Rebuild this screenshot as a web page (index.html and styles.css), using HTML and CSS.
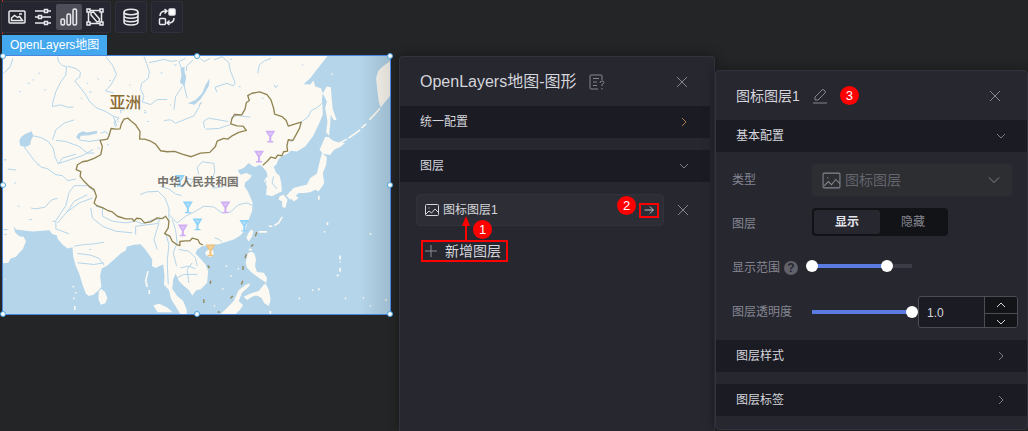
FILE: index.html
```
<!DOCTYPE html>
<html lang="zh-CN">

<head>
    <meta charset="UTF-8">
    <meta name="viewport" content="width=device-width, initial-scale=1.0">
    <title>OpenLayers地图</title>
    <link rel="stylesheet" href="styles.css">
</head>

<body>
    <div class="workspace">
        <main class="canvas">
            <div class="toolbar">
                <div class="tool-group">
                    <button class="tool" aria-label="图片"><svg viewBox="0 0 18 18"><rect x="1" y="3" width="16" height="12" rx="1"/><path d="M3.500 12.500V10l3-2.500 3 2 2-1 3 4zM11 6h3"/></svg></button>
                    <button class="tool" aria-label="设置"><svg viewBox="0 0 18 18"><path d="M1 3h9M14 3h3M1 9h3M8 9h9M1 15h9M14 15h3"/><rect x="10.500" y="1.500" width="3" height="3"/><rect x="4.500" y="7.500" width="3" height="3"/><rect x="10.500" y="13.500" width="3" height="3"/></svg></button>
                    <button class="tool active" aria-label="图形"><svg viewBox="0 0 18 18"><rect x="1" y="11" width="3.500" height="6" rx="1.500"/><rect x="7" y="6" width="3.500" height="11" rx="1.500"/><rect x="13" y="1" width="3.500" height="16" rx="1.500"/></svg></button>
                    <button class="tool" aria-label="编辑"><svg viewBox="0 0 18 18"><path d="M4 2.500h10M4 15.500h10M2.500 4v10M15.500 4v10M5 4.500l2.500-.5 6 7-.5 2.500-2 .5-6-7z"/><rect x="1" y="1" width="3" height="3"/><rect x="14" y="1" width="3" height="3"/><rect x="1" y="14" width="3" height="3"/><rect x="14" y="14" width="3" height="3"/></svg></button>
                </div>
                <div class="tool-group">
                    <button class="tool" aria-label="数据"><svg viewBox="0 0 18 18"><ellipse cx="9" cy="4" rx="7" ry="2.800"/><path d="M2 4v10c0 4 14 4 14 0V4M2 7.500c0 3.500 14 3.500 14 0M2 11c0 3.500 14 3.500 14 0"/></svg></button>
                </div>
                <div class="tool-group">
                    <button class="tool" aria-label="交互"><svg viewBox="0 0 18 18"><rect class="solid" x="11" y="1" width="6" height="6" rx="1"/><rect x="1.500" y="10.500" width="6" height="6" rx="1"/><path d="M2 8c0-3 2-5 6-5M6.500 1L9 3 6.500 5.500M16 10c0 3-2 5-6 5M11.500 12.500L9 15l2.500 2"/></svg></button>
                </div>
            </div>

            <span class="map-tab">OpenLayers地图</span>
            <div class="map">
                <svg class="map-svg" viewBox="6 18 1164 777">
                    <defs>
                        <linearGradient id="edge">
                            <stop offset="0" stop-color="#000" stop-opacity="0"/>
                            <stop offset="1" stop-color="#000" stop-opacity=".12"/>
                        </linearGradient>
                        <g id="marker">
                            <path d="M-15-17H15L3 2V14H9V18H-9V14H-3V2Z"/>
                            <path d="M-7-12H7L0-2Z" fill="#fff" opacity=".3"/>
                        </g>
                    </defs>
                    <rect class="land" x="0" y="10" width="1180" height="795"/>

                    <!-- seas -->
                    <path class="sea" d="M0 642L22 640 28 628 45 622 55 610 65 600 70 588 75 575 68 562 55 560 42 548 38 530 45 540 70 543 95 546 145 542 155 554 168 557 170 568 185 585 200 597 215 593 217 620 225 650 235 672 245 705 255 732 264 740 278 736 292 724 302 712 298 680 303 657 320 648 340 630 360 612 375 603 378 592 400 586 420 584 432 598 445 615 455 630 454 650 465 656 480 648 488 645 492 680 490 705 505 722 512 750 528 775 545 805H0Z"/>
                    <path class="sea" d="M988 10L965 40 945 65 930 85 910 103 930 104 940 92 945 110 962 115 968 130 965 150 967 170 968 195 955 225 938 260 915 290 890 305 872 303 862 312 848 318 835 328 828 345 820 350 828 370 838 378 843 400 845 425 830 432 815 440 797 435 800 410 790 392 802 380 798 365 785 350 778 345 765 352 755 348 745 340 730 355 712 362 720 375 738 370 755 378 745 390 735 398 732 410 742 425 750 442 757 460 755 485 745 510 735 540 720 558 700 570 680 576 655 584 630 586 605 590 590 600 585 612 600 628 615 645 623 665 620 700 600 720 588 722 575 738 565 722 550 710 535 695 525 672 518 690 515 718 530 740 548 755 558 780 560 805H1180V10Z"/>

                    <!-- islands -->
                    <path class="land" d="M980 110L992 112 995 150 998 178 1010 212 1000 210 992 195 990 225 987 258 978 248 982 215 975 175 980 155 968 130ZM965 285L975 262 985 262 998 272 1015 278 1035 280 1020 292 1002 300 990 316 968 312 958 300ZM965 310L980 322 978 345 968 370 972 400 965 412 955 425 945 420 930 428 910 430 895 430 885 440 870 450 858 438 880 415 905 408 920 405 930 385 950 372 955 350 960 330ZM838 440L850 435 862 450 855 475 846 472 845 455 835 450ZM872 445l15-7 8 8-15 10zM1172 32L1150 48 1135 62 1128 85 1132 120 1136 155 1142 173 1160 150 1172 135Z"/>
                    <path class="islands" d="M1140 175L1125 192 1108 210M1098 222L1084 235M1080 240L1060 255 1045 265M1040 268L1010 285M846 502L835 520 822 528M816 530H805M800 547H775"/>
                    <path class="land" d="M745 550L753 540 759 545 755 562 745 576 738 565ZM614 608l10-8 14 2 2 12-10 9-13-5zM742 612L752 606 762 612 767 630 764 650 770 668 790 670 800 685 798 700 785 692 768 680 752 668 740 655 736 640ZM775 725L795 700 805 720 811 750 806 770 792 762 783 745 768 738 755 742 740 752 730 742 750 732ZM650 805L680 775 700 755 715 722 738 705 750 702 745 712 725 730 715 755 728 768 720 780 705 795 700 805ZM294 728l6-10 12 8 8 20-6 16-14 4-7-16zM458 768l18-5 25 12 15 14h-45z"/>
                    <path class="dots" d="M215 712h5M222 730h5M219 745v5M222 770v12M442 665l-7 30 5 18M438 700v10M446 722v12M12 688v2M982 518v8M971 547h4M1020 618v12M1020 635v4M1020 655v12M1010 680l5-4M1109 553h5M895 747h5M935 722h4M953 720h6M1034 747h4M1088 746h4M1155 752h6M1109 770h4M956 438v12M994 73h4M850 712l0 0M745 600h10M676 650h4M712 658h4M810 785v8M690 680h4M640 770h4M665 718h4"/>
                    <path class="lake" d="M72 253L92 244 97 258 90 272 88 285 74 292 58 288 55 272 62 260ZM232 252L245 244 260 248 288 243 290 250 265 256 240 258 235 270 226 262ZM562 160L585 150 605 130 615 105 628 85 625 108 612 130 600 148 582 165ZM540 55l12-5 0 16 5 15-5 28-14-12 5-20zM600 158l5 0-5 8z"/>

                    <g class="river">
                        <path d="M8 70l20-20 8-25M170 20l3 15 12 12 12 3-2 25-15 20-15 30-10 35 0 10 25-5 20 7 18 0M200 48l25 8 14 10-2 15-15 12 18 22 15 20 10 18 20 20 30 12 25 15 15 5-15 12 5 15M315 20l20 25 12 28-15 30-18 20 25 6M430 20l8 20 8 25-3 20-20 15-3 18 10 20-5 18 25 8 20-15 30 0M445 38l25-5 20-5 20 6 20-2M360 190v-10l12 0M338 200l10 28M555 25l-20 10 10 25M490 212l20-2 15 10 30-12 25-10 15-25 5-15"/>
                        <path d="M95 258l25 5 22 12 15 20 5 25 10 22 30-10 45-15 30-18M70 292l15 20 15 20 20 20 20 5 25 18 20 3 15 15 25-5M155 270l10-30 25-20 30-10M165 272l30 3 40 15 25 20 20 0M235 270l30 5 35-5M175 340l10-15 40-12M300 250l15-5 12 15M10 330l5 0M20 358l25 3"/>
                        <path d="M90 475l12 3 30-5 20-22 18-5M285 430l-25-22-40 0-15 20-10 40-30 45 0 25 40 15M195 490l40-30 40-15M170 520l30-35 20-30 40-20M270 475l5 30 30 25 40 15 50 5M285 470l20 5 0 25 30 15 40 5 30-5 20 8 30-12 35-5M220 590l30-5 30-2 30-5M230 612l40 5 25 10 15 20M230 640l50 5 30-5M405 555v-25l65-8 10-15M418 435l20-8 35-2 20 20 12 30 0 40M470 600l-10-30 15-50M495 550l10 35-5 50 3 70M515 510l10 30 5 40-12 30 10 40M535 600l30 5 20 20 5 25M540 655l25-5 20 8M530 685l20-10 40 0M575 640l-15 20 5 40"/>
                        <path d="M772 70l5-25 15-12 20-8M578 30l-20 18 0 15M640 30l25-10 20 18 5 25 14 35-5 10-20-8-35 12 5 15M600 25l10 10 20-10M545 110l-20 30-5 40M550 105l10 40M612 235l-3-20 15-10 60 10M615 238l40-2 35-12M690 205l20-8 40 5M903 217l20-15 10-20 20-10 12-12M595 375l-5-22 15-17 35 5 3 25-10 30 5 20 30-5M555 385l25 5-10 15M480 410l25 8 20 15 18 5M505 495l25 25 25-20 30-15 25-15 30 2 25 18 25-3 25-22 25-5 18 8M642 565l15 5 8 8M785 380l12 15-5 20M820 380l-5 20 15 18"/>
                    </g>
                    <path class="specks" d="M20 55h5M80 100h6M55 125h5M95 90h4M265 128l8-3M258 100h4M290 85l5 5M325 92h5M240 143l5 4M130 120h5M112 70h5M430 190l8-4M440 215h5M480 70l6-3M690 28h5M715 110h6M822 105l5 10M828 112l4-6M905 45h4M870 275h6M785 145h5M10 330h6M40 400h5M110 345h5M50 470h6M85 510h8M155 515h8M265 600h6M430 182h5M520 45h8M508 165h4M385 105h4M350 215h4M290 295h6M320 285h5M8 540h12M10 555h8M745 695l8 5M765 685l8 10M785 700l10 5M965 120h6M945 85h4"/>

                    <!-- national border -->
                    <path class="border" d="M787 347L802 333 812 322 826 326 832 316 845 318 850 306 862 304 860 288 864 270 878 272 890 250 898 235 903 217 885 222 864 229 858 212 845 200 823 193 820 175 812 150 800 134 778 126 755 130 742 137 747 152 738 158 734 178 724 195 702 194 694 208 691 222 710 228 728 229 738 242 715 248 695 258 682 268 670 266 650 274 645 290 628 308 600 310 572 321 545 313 522 305 500 306 480 303 465 283 448 273 432 268 417 268 418 245 405 225 390 213 382 205 370 208 362 222 358 237 346 238 331 236 325 258 320 268 298 272 305 290 300 315 280 326 262 333 245 336 230 345 226 360 240 366 238 380 250 395 265 410 280 420 287 440 280 460 288 468 305 474 320 482 335 487 350 500 375 508 395 508 400 515 408 506 420 507 432 520 450 517 470 505 485 507 495 500 505 515 503 535 492 552 508 560 515 575 530 586 538 588 538 576 555 574 568 574 575 566 592 570 598 582 607 586"/>
                    <path class="border" d="M769 548l-4 12M759 585l-7 6M738 614l-4 12M728 650v12M727 694l-4 11M697 740l-7 7M652 788h6M610 750v11M631 694l-2 9M622 648l5 8"/>

                    <g class="purple"><use href="#marker" x="810" y="260"/><use href="#marker" x="776" y="320"/><use href="#marker" x="675" y="473"/><use href="#marker" x="547" y="542"/></g>
                    <g class="blue"><use href="#marker" x="538" y="393"/><use href="#marker" x="562" y="473"/><use href="#marker" x="591" y="524"/><use href="#marker" x="732" y="528"/></g>
                    <g class="orange"><use href="#marker" x="630" y="602"/></g>

                    <text class="asia" x="326" y="173">亚洲</text>
                    <text class="country" x="470" y="408">中华人民共和国</text>
                    <rect x="1080" y="10" width="92" height="795" fill="url(#edge)"/>
                </svg>
                <i class="handle n w"></i><i class="handle n"></i><i class="handle n e"></i>
                <i class="handle w"></i><i class="handle e"></i>
                <i class="handle s w"></i><i class="handle s"></i><i class="handle s e"></i>
            </div>
        </main>

        <section class="panel graph-panel">
            <header class="panel-head">
                <h1>OpenLayers地图-图形</h1>
                <button class="icon-btn" aria-label="帮助"><svg viewBox="0 0 16 16"><path d="M13 6V2q0-1-1-1H2Q1 1 1 2v12q0 1 1 1h7M4 4.500h6M4 8h4M4 11.500h4M11 9q0-2 2-2t2 1.500q0 1-2 2v1.500M13 14v1.500"/></svg></button>
                <button class="icon-btn close" aria-label="关闭"><svg viewBox="0 0 16 16"><path d="M3 3l10 10M13 3L3 13"/></svg></button>
            </header>
            <button class="section-bar">统一配置<svg class="warm" viewBox="0 0 16 16"><path d="M6 4l4 4-4 4"/></svg></button>
            <button class="section-bar">图层<svg viewBox="0 0 16 16"><path d="M4 6l4 4 4-4"/></svg></button>
            <div class="layer-row">
                <div class="layer-card">
                    <svg viewBox="0 0 16 16"><rect x="1.500" y="2.500" width="13" height="11" rx="1"/><path d="M2 12l3-3 2.500 2L11 7l3.500 3.500M5 5.500v1"/></svg>
                    <span>图标图层1</span>
                    <button class="go" aria-label="进入"><svg viewBox="0 0 16 16"><path d="M3 8h10M9 4l4 4-4 4"/></svg></button>
                    <b class="step step-2">2</b>
                </div>
                <button class="icon-btn" aria-label="删除"><svg viewBox="0 0 16 16"><path d="M3 3l10 10M13 3L3 13"/></svg></button>
            </div>
            <div class="add-row">
                <button class="add"><svg viewBox="0 0 16 16"><path d="M8 2v12M2 8h12"/></svg>新增图层</button>
                <svg class="arrow" viewBox="0 0 8 26"><path d="M3 8h2v18H3zM4 0l4 10H0z"/></svg>
                <b class="step step-1">1</b>
            </div>
        </section>

        <section class="panel layer-panel">
            <header class="panel-head">
                <h2>图标图层1</h2>
                <button class="icon-btn" aria-label="重命名"><svg viewBox="0 0 16 16"><path d="M1 15h14M3 12V9l7-7q1-1 2 0l1 1q1 1 0 2l-7 7z"/></svg></button>
                <b class="step">3</b>
                <button class="icon-btn close" aria-label="关闭"><svg viewBox="0 0 16 16"><path d="M3 3l10 10M13 3L3 13"/></svg></button>
            </header>
            <button class="section-bar">基本配置<svg viewBox="0 0 16 16"><path d="M4 6l4 4 4-4"/></svg></button>
            <div class="fields">
                <div class="field">
                    <label for="type">类型</label>
                    <div class="select">
                        <svg viewBox="0 0 18 18"><rect x="1" y="2" width="16" height="14" rx="1"/><path d="M2 14l4-4 3 3 4-5 4 4M5.500 6v1"/></svg>
                        <select id="type" disabled>
                            <option>图标图层</option>
                        </select>
                        <svg class="caret" viewBox="0 0 16 16"><path d="M3 5.500l5 5 5-5"/></svg>
                    </div>
                </div>
                <div class="field">
                    <span>图层</span>
                    <div class="toggle">
                        <label><input type="radio" name="visible" checked><span>显示</span></label>
                        <label><input type="radio" name="visible"><span>隐藏</span></label>
                    </div>
                </div>
                <div class="field">
                    <label for="range-min">显示范围<i class="help">?</i></label>
                    <div class="range">
                        <input type="range" id="range-min" min="0" max="20" value="0" aria-label="最小">
                        <input type="range" min="0" max="20" value="15" aria-label="最大">
                    </div>
                </div>
                <div class="field">
                    <label for="opacity">图层透明度</label>
                    <div class="opacity">
                        <div class="range full">
                            <input type="range" min="0" max="1" step="0.1" value="1" aria-label="图层透明度">
                        </div>
                        <div class="number">
                            <input type="text" id="opacity" value="1.0">
                            <button aria-label="增加"><svg viewBox="0 0 16 16"><path d="M4 10l4-4 4 4"/></svg></button>
                            <button aria-label="减少"><svg viewBox="0 0 16 16"><path d="M4 6l4 4 4-4"/></svg></button>
                        </div>
                    </div>
                </div>
            </div>
            <button class="section-bar">图层样式<svg viewBox="0 0 16 16"><path d="M6 4l4 4-4 4"/></svg></button>
            <button class="section-bar">图层标签<svg viewBox="0 0 16 16"><path d="M6 4l4 4-4 4"/></svg></button>
        </section>
    </div>
</body>

</html>
```
FILE: styles.css
```
* {
    box-sizing: border-box;
}

body {
    margin: 0;
    background: #242526;
    color: #d5d6dc;
    font-family: "Liberation Sans", "Noto Sans CJK SC", sans-serif;
    font-size: 12px;
    line-height: 16px;
}

button,
input,
select {
    font: inherit;
    color: inherit;
    margin: 0;
    padding: 0;
    border: none;
    background: none;
}

svg {
    width: 16px;
    height: 16px;
    flex: none;
    fill: none;
    stroke: currentColor;
}

.workspace {
    display: grid;
    grid-template-columns: 399fr 316fr 313fr;
    min-height: 100vh;
}

/* canvas */
.canvas {
    padding: 1px 8px 0 1px;
    background: repeating-linear-gradient(#e0342c 0 4px, transparent 4px 6px) 2px 0 / 1px 55px no-repeat;
}

.toolbar {
    display: flex;
    gap: 4px;
}

.tool-group {
    display: flex;
    padding: 2px;
    border: 1px solid #30303c;
    border-radius: 3px;
    background: #262630;
}

.tool {
    display: flex;
    align-items: center;
    justify-content: center;
    width: 26px;
    height: 26px;
    border-radius: 2px;
    color: #e9e9ee;
}

.tool svg {
    width: 18px;
    height: 18px;
    stroke-width: 1.5;
}

.tool .solid {
    fill: #fff;
}

.tool.active {
    background: #4d4e57;
}

.map-tab {
    display: block;
    width: fit-content;
    margin: 2px 0 0 1px;
    padding: 2px 8px;
    background: #43a8ee;
    color: #fff;
}

.map {
    position: relative;
    margin-left: 1px;
    border: 1px solid #4a86e0;
}

.map-svg {
    display: block;
    width: 100%;
    height: auto;
    stroke: none;
}

.land {
    fill: #fcf9f2;
}

.sea,
.lake {
    fill: #b4d5ea;
}

.islands,
.dots {
    fill: none;
    stroke: #fcf9f2;
    stroke-width: 5;
}

.river,
.specks {
    fill: none;
    stroke: #b4d5ea;
    stroke-width: 3;
    stroke-linejoin: round;
}

.border {
    fill: none;
    stroke: #918452;
    stroke-width: 4;
    stroke-linejoin: round;
}

.purple {
    fill: #cfaef5;
}

.blue {
    fill: #8ed2f8;
}

.orange {
    fill: #f0c27c;
}

.asia {
    font-size: 48px;
    font-weight: 500;
    fill: #8b6b34;
}

.country {
    font-size: 35px;
    font-weight: bold;
    fill: #77756f;
}

.handle {
    position: absolute;
    left: 50%;
    top: 50%;
    width: 6px;
    height: 6px;
    margin: -3px;
    border: 1px solid #4aa3e0;
    border-radius: 50%;
    background: #fff;
}

.handle.n {
    top: 0;
}

.handle.s {
    top: 100%;
}

.handle.w {
    left: 0;
}

.handle.e {
    left: 100%;
}

/* panels */
.panel {
    border: 1px solid #32333f;
    border-radius: 4px;
    background: #272730;
    box-shadow: 0 0 12px rgba(0, 0, 0, 0.4);
}

.graph-panel {
    margin-top: 56px;
    border-bottom: none;
    border-radius: 4px 4px 0 0;
}

.layer-panel {
    margin: 70px 0 1px;
}

.panel-head {
    display: flex;
    align-items: center;
    gap: 12px;
    height: 49px;
    padding: 0 24px 0 20px;
}

.panel-head h1,
.panel-head h2 {
    margin: 0;
    font-size: 16px;
    font-weight: normal;
    line-height: 20px;
    white-space: nowrap;
}

.panel-head h2 {
    font-size: 14px;
}

.icon-btn {
    display: flex;
    color: #858691;
}

.icon-btn.close {
    margin-left: auto;
}

.section-bar {
    display: flex;
    align-items: center;
    justify-content: space-between;
    width: 100%;
    height: 32px;
    margin-bottom: 12px;
    padding: 0 18px 0 20px;
    background: #1b1b23;
}

.section-bar svg {
    color: #7c7d88;
}

.section-bar .warm {
    color: #a37c4e;
}

.graph-panel .section-bar {
    width: calc(100% - 4px);
}

.layer-row {
    display: flex;
    align-items: center;
    gap: 11px;
    padding: 0 23px 0 16px;
}

.layer-card {
    position: relative;
    display: flex;
    flex: 1;
    align-items: center;
    gap: 3px;
    height: 32px;
    padding: 0 4px 0 7px;
    border: 1px solid #31323c;
    border-radius: 4px;
    background: #2d2e35;
}

.go {
    display: flex;
    align-items: center;
    justify-content: center;
    width: 20px;
    height: 15px;
    margin-left: auto;
    border: 2px solid #f00;
}

.go svg {
    width: 14px;
    height: 14px;
}

.add-row {
    position: relative;
    padding: 14px 0 0 21px;
}

.add {
    display: flex;
    align-items: center;
    gap: 6px;
    height: 22px;
    padding: 0 5px 0 0;
    border: 2px solid #f00;
    font-size: 14px;
}

.add svg {
    color: #8b8c97;
}

.step {
    width: 19px;
    height: 19px;
    border-radius: 50%;
    background: #f00;
    color: #fff;
    font-size: 13px;
    font-weight: normal;
    line-height: 19px;
    text-align: center;
}

.step-1 {
    position: absolute;
    left: 73px;
    top: -6px;
}

.step-2 {
    position: absolute;
    right: 27px;
    top: 1px;
}

.arrow {
    position: absolute;
    left: 62px;
    top: -10px;
    width: 8px;
    height: 26px;
    fill: #f00;
    stroke: none;
}

/* layer settings */
.fields {
    display: grid;
    gap: 12px;
    margin-bottom: 12px;
    padding: 0 9px 0 16px;
}

.field {
    display: grid;
    grid-template-columns: 80px 1fr;
    align-items: center;
    height: 32px;
    color: #858691;
}

.field > label {
    display: flex;
    align-items: center;
    gap: 4px;
    white-space: nowrap;
}

.help {
    width: 14px;
    height: 14px;
    border-radius: 50%;
    background: #60616b;
    color: #272730;
    font-style: normal;
    font-weight: bold;
    line-height: 14px;
    text-align: center;
}

.select {
    display: flex;
    align-items: center;
    gap: 4px;
    max-width: 200px;
    height: 32px;
    padding: 0 10px;
    border-radius: 4px;
    background: #2d2e31;
}

.select svg {
    width: 19px;
    height: 19px;
}

.select .caret {
    width: 16px;
    height: 16px;
}

.select select {
    flex: 1;
    min-width: 0;
    appearance: none;
    color: #63646d;
    font-size: 14px;
    opacity: 1;
}

.toggle {
    display: flex;
    width: 136px;
    height: 28px;
    margin-bottom: 4px;
    padding: 2px;
    border-radius: 4px;
    background: #121316;
}

.toggle label {
    flex: 1;
}

.toggle input {
    position: absolute;
    opacity: 0;
}

.toggle span {
    display: block;
    border-radius: 3px;
    line-height: 24px;
    text-align: center;
}

.toggle input:checked + span {
    background: #272730;
    color: #e3e4e9;
    font-weight: bold;
}

.range {
    display: grid;
    align-items: center;
    width: 112px;
    height: 12px;
    margin: 0 0 4px -6px;
    background: linear-gradient(to right, #5b7be0 75%, #3c3c46 75%) 6px 4px / 100px 4px no-repeat;
}

.range.full {
    margin-bottom: 0;
    background: linear-gradient(#5b7be0, #5b7be0) 6px 4px / 100px 4px no-repeat;
}

.range input {
    grid-area: 1 / 1;
    width: 100%;
    height: 12px;
    appearance: none;
    pointer-events: none;
}

.range input::-webkit-slider-thumb {
    appearance: none;
    width: 12px;
    height: 12px;
    border-radius: 50%;
    background: #fff;
    pointer-events: auto;
}

.opacity {
    display: flex;
    align-items: center;
}

.number {
    display: grid;
    grid-template-columns: 2fr 1fr;
    flex: 1;
    height: 32px;
    overflow: hidden;
    border: 1px solid #4b4c55;
    border-radius: 3px;
    background: #1b1b23;
    color: #d5d6dc;
}

.number input {
    grid-row: span 2;
    width: 100%;
    padding: 0 0 2px 8px;
}

.number button {
    display: flex;
    align-items: center;
    justify-content: center;
    border-left: 1px solid #4b4c55;
    background: #131417;
}

.number button + button {
    border-top: 1px solid #4b4c55;
}
```
